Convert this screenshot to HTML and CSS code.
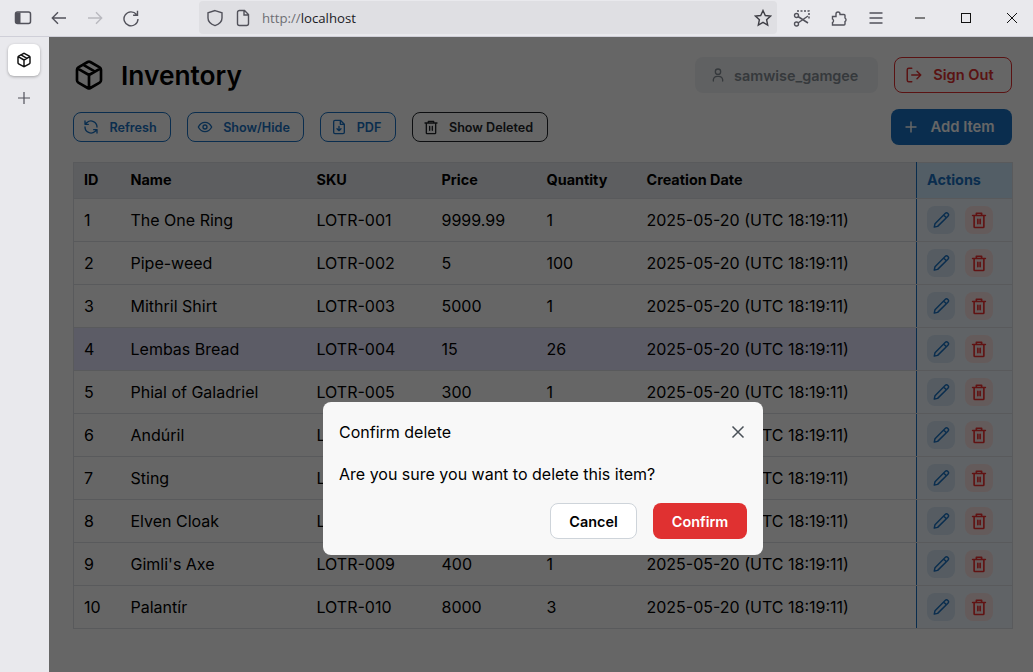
FILE: index.html
```html
<!DOCTYPE html>
<html lang="en">
<head>
<meta charset="utf-8">
<title>Inventory</title>
<link rel="stylesheet" href="styles.css">
</head>
<body>
<header class="browser-bar">
  <div class="nav-icons">
    <svg class="ic" width="18" height="18" viewBox="0 0 18 18"><rect x="1.500" y="3" width="15" height="11.500" rx="2" fill="none" stroke="#52525b" stroke-width="1.500"/><rect x="2" y="3.500" width="4.500" height="10.500" fill="#52525b"/></svg>
    <svg class="ic" width="18" height="18" viewBox="0 0 18 18"><path d="M16 9H2.500M8 3.200 2.300 9 8 14.800" fill="none" stroke="#52525b" stroke-width="1.400"/></svg>
    <svg class="ic" width="18" height="18" viewBox="0 0 18 18"><path d="M2 9h13.500M10 3.200 15.700 9 10 14.800" fill="none" stroke="#b9b9bf" stroke-width="1.400"/></svg>
    <svg class="ic" width="18" height="18" viewBox="0 0 18 18"><path d="M14.500 5.500A7 7 0 1 0 16 10M15.500 1.800v4.400h-4.400" fill="none" stroke="#52525b" stroke-width="1.400"/></svg>
  </div>
  <div class="url-bar">
    <svg width="18" height="18" viewBox="0 0 18 18"><path d="M9 1.600 16 3.800V9c0 3.700-3 6.200-7 7.600C5 15.200 2 12.700 2 9V3.800Z" fill="none" stroke="#52525b" stroke-width="1.400"/></svg>
    <svg width="16" height="18" viewBox="0 0 16 18"><path d="M2.500 3.500a2 2 0 0 1 2-2h5l4 4v9a2 2 0 0 1-2 2h-7a2 2 0 0 1-2-2ZM9 1.500v4.500h4.500" fill="none" stroke="#52525b" stroke-width="1.400"/></svg>
    <span class="url"><span class="url-dim">http://</span>localhost</span>
    <svg class="star" width="18" height="18" viewBox="0 0 18 18"><path d="M9 1.500 11.300 6.500l5.200.6-3.900 3.600 1.100 5.300L9 13.300 4.300 16l1.100-5.300L1.500 7.100l5.200-.6Z" fill="none" stroke="#3f3f46" stroke-width="1.400"/></svg>
  </div>
  <div class="tool-icons">
    <svg width="18" height="18" viewBox="0 0 18 18"><path d="M4 2h12v9" fill="none" stroke="#52525b" stroke-width="1.500" stroke-dasharray="2 1.500"/><circle cx="3.500" cy="15" r="2" fill="none" stroke="#52525b" stroke-width="1.400"/><circle cx="3.500" cy="6.500" r="2" fill="none" stroke="#52525b" stroke-width="1.400"/><path d="M5 7.500 15 14M5 14l10-7" fill="none" stroke="#52525b" stroke-width="1.500"/></svg>
    <svg width="18" height="18" viewBox="0 0 18 18"><path d="M2.500 7.500h3.500V5a2 2 0 0 1 4 0v.5h4a1 1 0 0 1 1 1V9a2 2 0 0 1 0 3.500V15a1 1 0 0 1-1 1H2.500v-2.500a2 2 0 0 0 0-3.500Z" fill="none" stroke="#52525b" stroke-width="1.400"/></svg>
    <svg width="18" height="18" viewBox="0 0 18 18"><path d="M2.500 4h13M2.500 9h13M2.500 14h13" stroke="#52525b" stroke-width="1.400"/></svg>
  </div>
  <div class="win-controls">
    <svg width="12" height="12" viewBox="0 0 12 12"><path d="M1 6h10" stroke="#111" stroke-width="1"/></svg>
    <svg width="12" height="12" viewBox="0 0 12 12"><rect x="1.500" y="1.500" width="9" height="9" fill="none" stroke="#111" stroke-width="1"/></svg>
    <svg width="12" height="12" viewBox="0 0 12 12"><path d="M1 1l10 10M11 1 1 11" stroke="#111" stroke-width="1"/></svg>
  </div>
</header>
<div class="shell">
  <aside class="sidebar">
    <div class="tab">
      <svg width="16" height="16" viewBox="0 0 24 24" fill="none" stroke="#111" stroke-width="2.200" stroke-linecap="round" stroke-linejoin="round"><path d="M7.500 4.270 16.500 9.420M21 8a2 2 0 0 0-1-1.730l-7-4a2 2 0 0 0-2 0l-7 4A2 2 0 0 0 3 8v8a2 2 0 0 0 1 1.730l7 4a2 2 0 0 0 2 0l7-4A2 2 0 0 0 21 16ZM3.290 7 12 12l8.710-5M12 22V12"/></svg>
    </div>
    <svg class="add-tab" width="14" height="14" viewBox="0 0 14 14"><path d="M7 1v12M1 7h12" stroke="#52525b" stroke-width="1.200"/></svg>
  </aside>
  <main class="app">
    <div class="top-row">
      <div class="title-wrap">
        <svg width="32" height="32" viewBox="0 0 24 24" fill="none" stroke="#000" stroke-width="2" stroke-linecap="round" stroke-linejoin="round"><path d="M7.500 4.270 16.500 9.420M21 8a2 2 0 0 0-1-1.730l-7-4a2 2 0 0 0-2 0l-7 4A2 2 0 0 0 3 8v8a2 2 0 0 0 1 1.730l7 4a2 2 0 0 0 2 0l7-4A2 2 0 0 0 21 16ZM3.290 7 12 12l8.710-5M12 22V12"/></svg>
        <h1 class="title">Inventory</h1>
      </div>
      <div class="user-wrap">
        <div class="user-chip">
          <svg width="16" height="16" viewBox="0 0 24 24" fill="none" stroke="currentColor" stroke-width="2" stroke-linecap="round"><circle cx="12" cy="7" r="4"/><path d="M5 21v-2a6 6 0 0 1 6-5h2a6 6 0 0 1 6 5v2"/></svg>
          <span>samwise_gamgee</span>
        </div>
        <button class="signout">
          <svg width="18" height="18" viewBox="0 0 24 24" fill="none" stroke="currentColor" stroke-width="2" stroke-linecap="round" stroke-linejoin="round"><path d="M9 21H5a2 2 0 0 1-2-2V5a2 2 0 0 1 2-2h4M16 17l5-5-5-5M21 12H9"/></svg>
          <span>Sign Out</span>
        </button>
      </div>
    </div>
    <div class="action-row">
      <div class="btn-group">
        <button class="btn btn-refresh"><svg width="16" height="16" viewBox="0 0 24 24" fill="none" stroke="currentColor" stroke-width="2" stroke-linecap="round" stroke-linejoin="round"><path d="M21 12a9 9 0 0 0-15-6.700L3 8M3 3v5h5M3 12a9 9 0 0 0 15 6.700L21 16M21 21v-5h-5"/></svg><span>Refresh</span></button>
        <button class="btn btn-show"><svg width="16" height="16" viewBox="0 0 24 24" fill="none" stroke="currentColor" stroke-width="2"><path d="M2 12s3.600-7 10-7 10 7 10 7-3.600 7-10 7-10-7-10-7Z"/><circle cx="12" cy="12" r="3"/></svg><span>Show/Hide</span></button>
        <button class="btn btn-pdf"><svg width="16" height="16" viewBox="0 0 24 24" fill="none" stroke="currentColor" stroke-width="2" stroke-linecap="round" stroke-linejoin="round"><path d="M14 2H6a2 2 0 0 0-2 2v16a2 2 0 0 0 2 2h12a2 2 0 0 0 2-2V8ZM14 2v6h6M12 11v6M9 14.500l3 3 3-3"/></svg><span>PDF</span></button>
        <button class="btn btn-deleted"><svg width="16" height="16" viewBox="0 0 24 24" fill="none" stroke="currentColor" stroke-width="2" stroke-linecap="round" stroke-linejoin="round"><path d="M3 6h18M8 6V3.500h8V6M19 6v15a1 1 0 0 1-1 1H6a1 1 0 0 1-1-1V6M10 11v6M14 11v6"/></svg><span>Show Deleted</span></button>
      </div>
      <button class="add-item"><svg width="16" height="16" viewBox="0 0 16 16"><path d="M8 2.500v11M2.500 8h11" stroke="currentColor" stroke-width="1.500"/></svg><span>Add Item</span></button>
    </div>
    <table class="grid">
      <colgroup><col class="c-id"><col class="c-name"><col class="c-sku"><col class="c-price"><col class="c-qty"><col class="c-date"><col class="c-act"></colgroup>
      <thead><tr><th>ID</th><th>Name</th><th>SKU</th><th>Price</th><th>Quantity</th><th>Creation Date</th><th class="act">Actions</th></tr></thead>
      <tbody id="rows"></tbody>
    </table>
    <div class="overlay">
      <div class="modal">
        <div class="modal-head"><span>Confirm delete</span>
          <svg width="16" height="16" viewBox="0 0 16 16"><path d="M2.500 2.500l11 11M13.500 2.500l-11 11" stroke="#495057" stroke-width="1.500"/></svg>
        </div>
        <p class="modal-text">Are you sure you want to delete this item?</p>
        <div class="modal-actions">
          <button class="m-cancel">Cancel</button>
          <button class="m-confirm">Confirm</button>
        </div>
      </div>
    </div>
  </main>
</div>
<script src="app.js"></script>
</body>
</html>
```
FILE: app.js
```js
const items = [
  ["The One Ring","LOTR-001","9999.99","1"],
  ["Pipe-weed","LOTR-002","5","100"],
  ["Mithril Shirt","LOTR-003","5000","1"],
  ["Lembas Bread","LOTR-004","15","26"],
  ["Phial of Galadriel","LOTR-005","300","1"],
  ["Andúril","LOTR-006","800","1"],
  ["Sting","LOTR-007","600","1"],
  ["Elven Cloak","LOTR-008","150","1"],
  ["Gimli's Axe","LOTR-009","400","1"],
  ["Palantír","LOTR-010","8000","3"]
];
const pencil = '<svg width="18" height="18" viewBox="0 0 24 24" fill="none" stroke="currentColor" stroke-width="1.900" stroke-linecap="round" stroke-linejoin="round"><path d="M17.500 3.200a2.600 2.600 0 0 1 3.700 3.700L7.500 20.500 3 21.500l1-4.500ZM15.500 5.200l3.700 3.700"/></svg>';
const trash = '<svg width="18" height="18" viewBox="0 0 24 24" fill="none" stroke="currentColor" stroke-width="2.200" stroke-linecap="round" stroke-linejoin="round"><path d="M3.500 6h17M8.500 6V3h7v3M18.500 6v15a1 1 0 0 1-1 1h-11a1 1 0 0 1-1-1V6M10.500 11v6M13.500 11v6"/></svg>';
document.getElementById("rows").innerHTML = items.map((it, i) =>
  `<tr class="${i === 3 ? "hl" : ""}"><td>${i + 1}</td><td>${it[0]}</td><td>${it[1]}</td><td>${it[2]}</td><td>${it[3]}</td><td>2025-05-20 (UTC 18:19:11)</td><td class="act"><div class="acts"><span class="ib ib-edit">${pencil}</span><span class="ib ib-del">${trash}</span></div></td></tr>`
).join("");
```
FILE: styles.css
```css
* { box-sizing: border-box; }
html, body { margin: 0; height: 100%; overflow: hidden; }
body { font-family: Inter, "Liberation Sans", sans-serif; color: #000; background: #e9e9ed; display: flex; flex-direction: column; width: 1033px; height: 672px; }
.browser-bar { height: 37px; flex: none; display: flex; align-items: center; background: #e9e9ed; border-bottom: 1px solid #cfcfd8; padding-left: 14px; }
.nav-icons { display: flex; gap: 18px; width: 185px; align-items: center; }
.url-bar { width: 578px; height: 33px; margin-top: -1px; background: #dfdfe3; border-radius: 4px; display: flex; align-items: center; padding: 0 5px 0 7px; gap: 11px; }
.url { font-size: 13.200px; color: #1b1b1f; font-family: "Open Sans", sans-serif; }
.url-dim { color: #6e6e74; }
.star { margin-left: auto; }
.tool-icons { display: flex; gap: 19px; margin-left: 16px; align-items: center; width: 104px; }
.win-controls { display: flex; gap: 34px; margin-left: 17px; align-items: center; }
.shell { flex: 1; display: flex; min-height: 0; }
.sidebar { width: 49px; flex: none; display: flex; flex-direction: column; align-items: center; padding-top: 7px; padding-right: 1px; gap: 15px; background: #e9e9ed; }
.tab { width: 32px; height: 32px; background: #fff; border-radius: 6px; box-shadow: 0 1px 3px rgba(0,0,0,.3); display: flex; align-items: center; justify-content: center; }
.add-tab { display: block; }
.app { flex: 1; position: relative; background: #fff; padding: 20px 21px 0 24px; min-width: 0; }
.top-row { display: flex; justify-content: space-between; align-items: center; height: 36px; }
.title-wrap { display: flex; align-items: center; gap: 16px; }
.title { font-size: 26.300px; font-weight: 600; margin: 0; line-height: 36px; padding-top: 2px; }
.user-wrap { display: flex; gap: 16px; align-items: center; }
.user-chip { width: 183px; height: 36px; background: #f1f3f5; border-radius: 8px; color: #868e96; font-size: 14.400px; font-weight: 600; display: flex; align-items: center; gap: 8px; padding-left: 15px; }
.signout { width: 118px; height: 36px; border: 1px solid #e03131; background: #fff; color: #e03131; border-radius: 8px; font: 600 14.600px Inter, sans-serif; display: flex; align-items: center; justify-content: center; gap: 10px; padding: 0 7px 0 0; }
.action-row { display: flex; justify-content: space-between; align-items: center; margin-top: 16px; height: 36px; }
.btn-group { display: flex; gap: 16px; }
.btn { height: 30px; border: 1px solid #1971c2; color: #1971c2; background: #fff; border-radius: 8px; font: 600 12.600px Inter, sans-serif; display: flex; align-items: center; padding: 0 4px 0 0; justify-content: center; gap: 10px; }
.btn-refresh { width: 98px; }
.btn-show { width: 117px; }
.btn-pdf { width: 76px; }
.btn-deleted { width: 136px; border-color: #212529; color: #212529; }
.add-item { width: 121px; height: 36px; border: 0; background: #1971c2; color: #fff; border-radius: 8px; font: 600 14.800px Inter, sans-serif; display: flex; align-items: center; justify-content: center; gap: 11px; padding: 0 5px 0 0; }
.grid { border-collapse: collapse; table-layout: fixed; width: 939px; margin-top: 17px; font-size: 16px; background: #fff; border: 1px solid #dee2e6; }
.c-id { width: 47px; }
.c-name { width: 186px; }
.c-sku { width: 125px; }
.c-price { width: 105px; }
.c-qty { width: 100px; }
.c-date { width: 280px; }
.c-act { width: 96px; }
th { height: 36px; background: #e9ecef; font-size: 14.400px; font-weight: 700; text-align: left; padding: 0 10px 2px; border-bottom: 1px solid #dee2e6; }
td { height: 43px; padding: 0 10px; border-bottom: 1px solid #dee2e6; white-space: nowrap; }
tbody td { background: #fff; }
.hl td { background: #e7e7ff; }
th.act { background: #d0ebff; color: #1971c2; border-left: 1px solid #1971c2; }
td.act { background: #f0f8ff; border-left: 1px solid #1971c2; }
.acts { display: flex; gap: 10px; }
.ib { width: 28px; height: 28px; border-radius: 8px; display: flex; align-items: center; justify-content: center; }
.ib-edit { background: #d6e6f5; color: #1971c2; }
.ib-del { background: #fbe3e3; color: #f03030; }
.overlay { position: absolute; inset: 0; background: rgba(0,0,0,.6); display: flex; justify-content: center; padding-top: 365px; padding-left: 4px; }
.modal { width: 440px; height: 153px; background: #f8f8f8; border-radius: 8px; padding: 16px; }
.modal-head { display: flex; justify-content: space-between; align-items: center; font-size: 16px; height: 28px; padding-right: 1px; }
.modal-text { margin: 16px 0 0; font-size: 16px; line-height: 24px; }
.modal-actions { display: flex; justify-content: flex-end; gap: 16px; margin-top: 17px; }
.m-cancel { width: 87px; height: 36px; border: 1px solid #ced4da; border-radius: 8px; background: #fff; font: 600 14.400px Inter, sans-serif; color: #000; padding: 0; }
.m-confirm { width: 94px; height: 36px; border: 0; border-radius: 8px; background: #e03131; color: #fff; font: 600 14.400px Inter, sans-serif; padding: 0; }
```
